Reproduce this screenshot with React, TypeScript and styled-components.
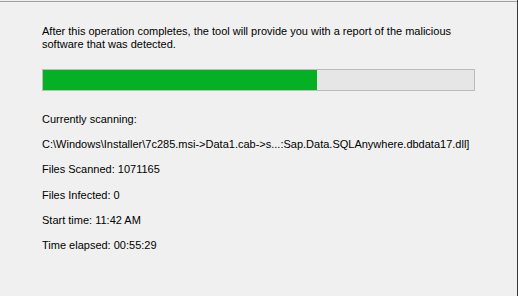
import React from "react";
import styled, { createGlobalStyle } from "styled-components";

const Global = createGlobalStyle`
  html, body { margin: 0; padding: 0; background: #f0f0f0; }
  body { width: 518px; height: 296px; overflow: hidden; }
`;

const Window = styled.div`
  box-sizing: border-box;
  width: 518px;
  height: 296px;
  padding-top: 1px;
  background: #f0f0f0;
  border-right: 1px solid #3a3a3a;
`;

const Panel = styled.div`
  box-sizing: border-box;
  height: 295px;
  border-top: 1px solid #a0a0a0;
  padding: 23px 43px 0 42px;
  font-family: "Liberation Sans", Arial, sans-serif;
  font-size: 11px;
  color: #000;
  display: flex;
  flex-direction: column;
`;

const Intro = styled.p`
  margin: 0;
  line-height: 13px;
  width: 433px;
`;

const Track = styled.div`
  box-sizing: border-box;
  margin-top: 18px;
  width: 433px;
  height: 22px;
  border: 1px solid #bcbcbc;
  background: #e6e6e6;
`;

const Fill = styled.div`
  height: 100%;
  background: #06b025;
`;

const Details = styled.div`
  margin-top: 20px;
  display: flex;
  flex-direction: column;
  gap: 8.2px;
`;

const Line = styled.div`
  line-height: 17px;
  white-space: nowrap;
`;

export default function App() {
  const progress = 274 / 431;
  return (
    <>
      <Global />
      <Window>
        <Panel>
          <Intro>
            After this operation completes, the tool will provide you with a report of the malicious software that was detected.
          </Intro>
          <Track>
            <Fill style={{ width: `${progress * 100}%` }} />
          </Track>
          <Details>
            <Line>Currently scanning:</Line>
            <Line>C:\Windows\Installer\7c285.msi-&gt;Data1.cab-&gt;s...:Sap.Data.SQLAnywhere.dbdata17.dll]</Line>
            <Line>Files Scanned: 1071165</Line>
            <Line>Files Infected: 0</Line>
            <Line>Start time: 11:42 AM</Line>
            <Line>Time elapsed: 00:55:29</Line>
          </Details>
        </Panel>
      </Window>
    </>
  );
}
